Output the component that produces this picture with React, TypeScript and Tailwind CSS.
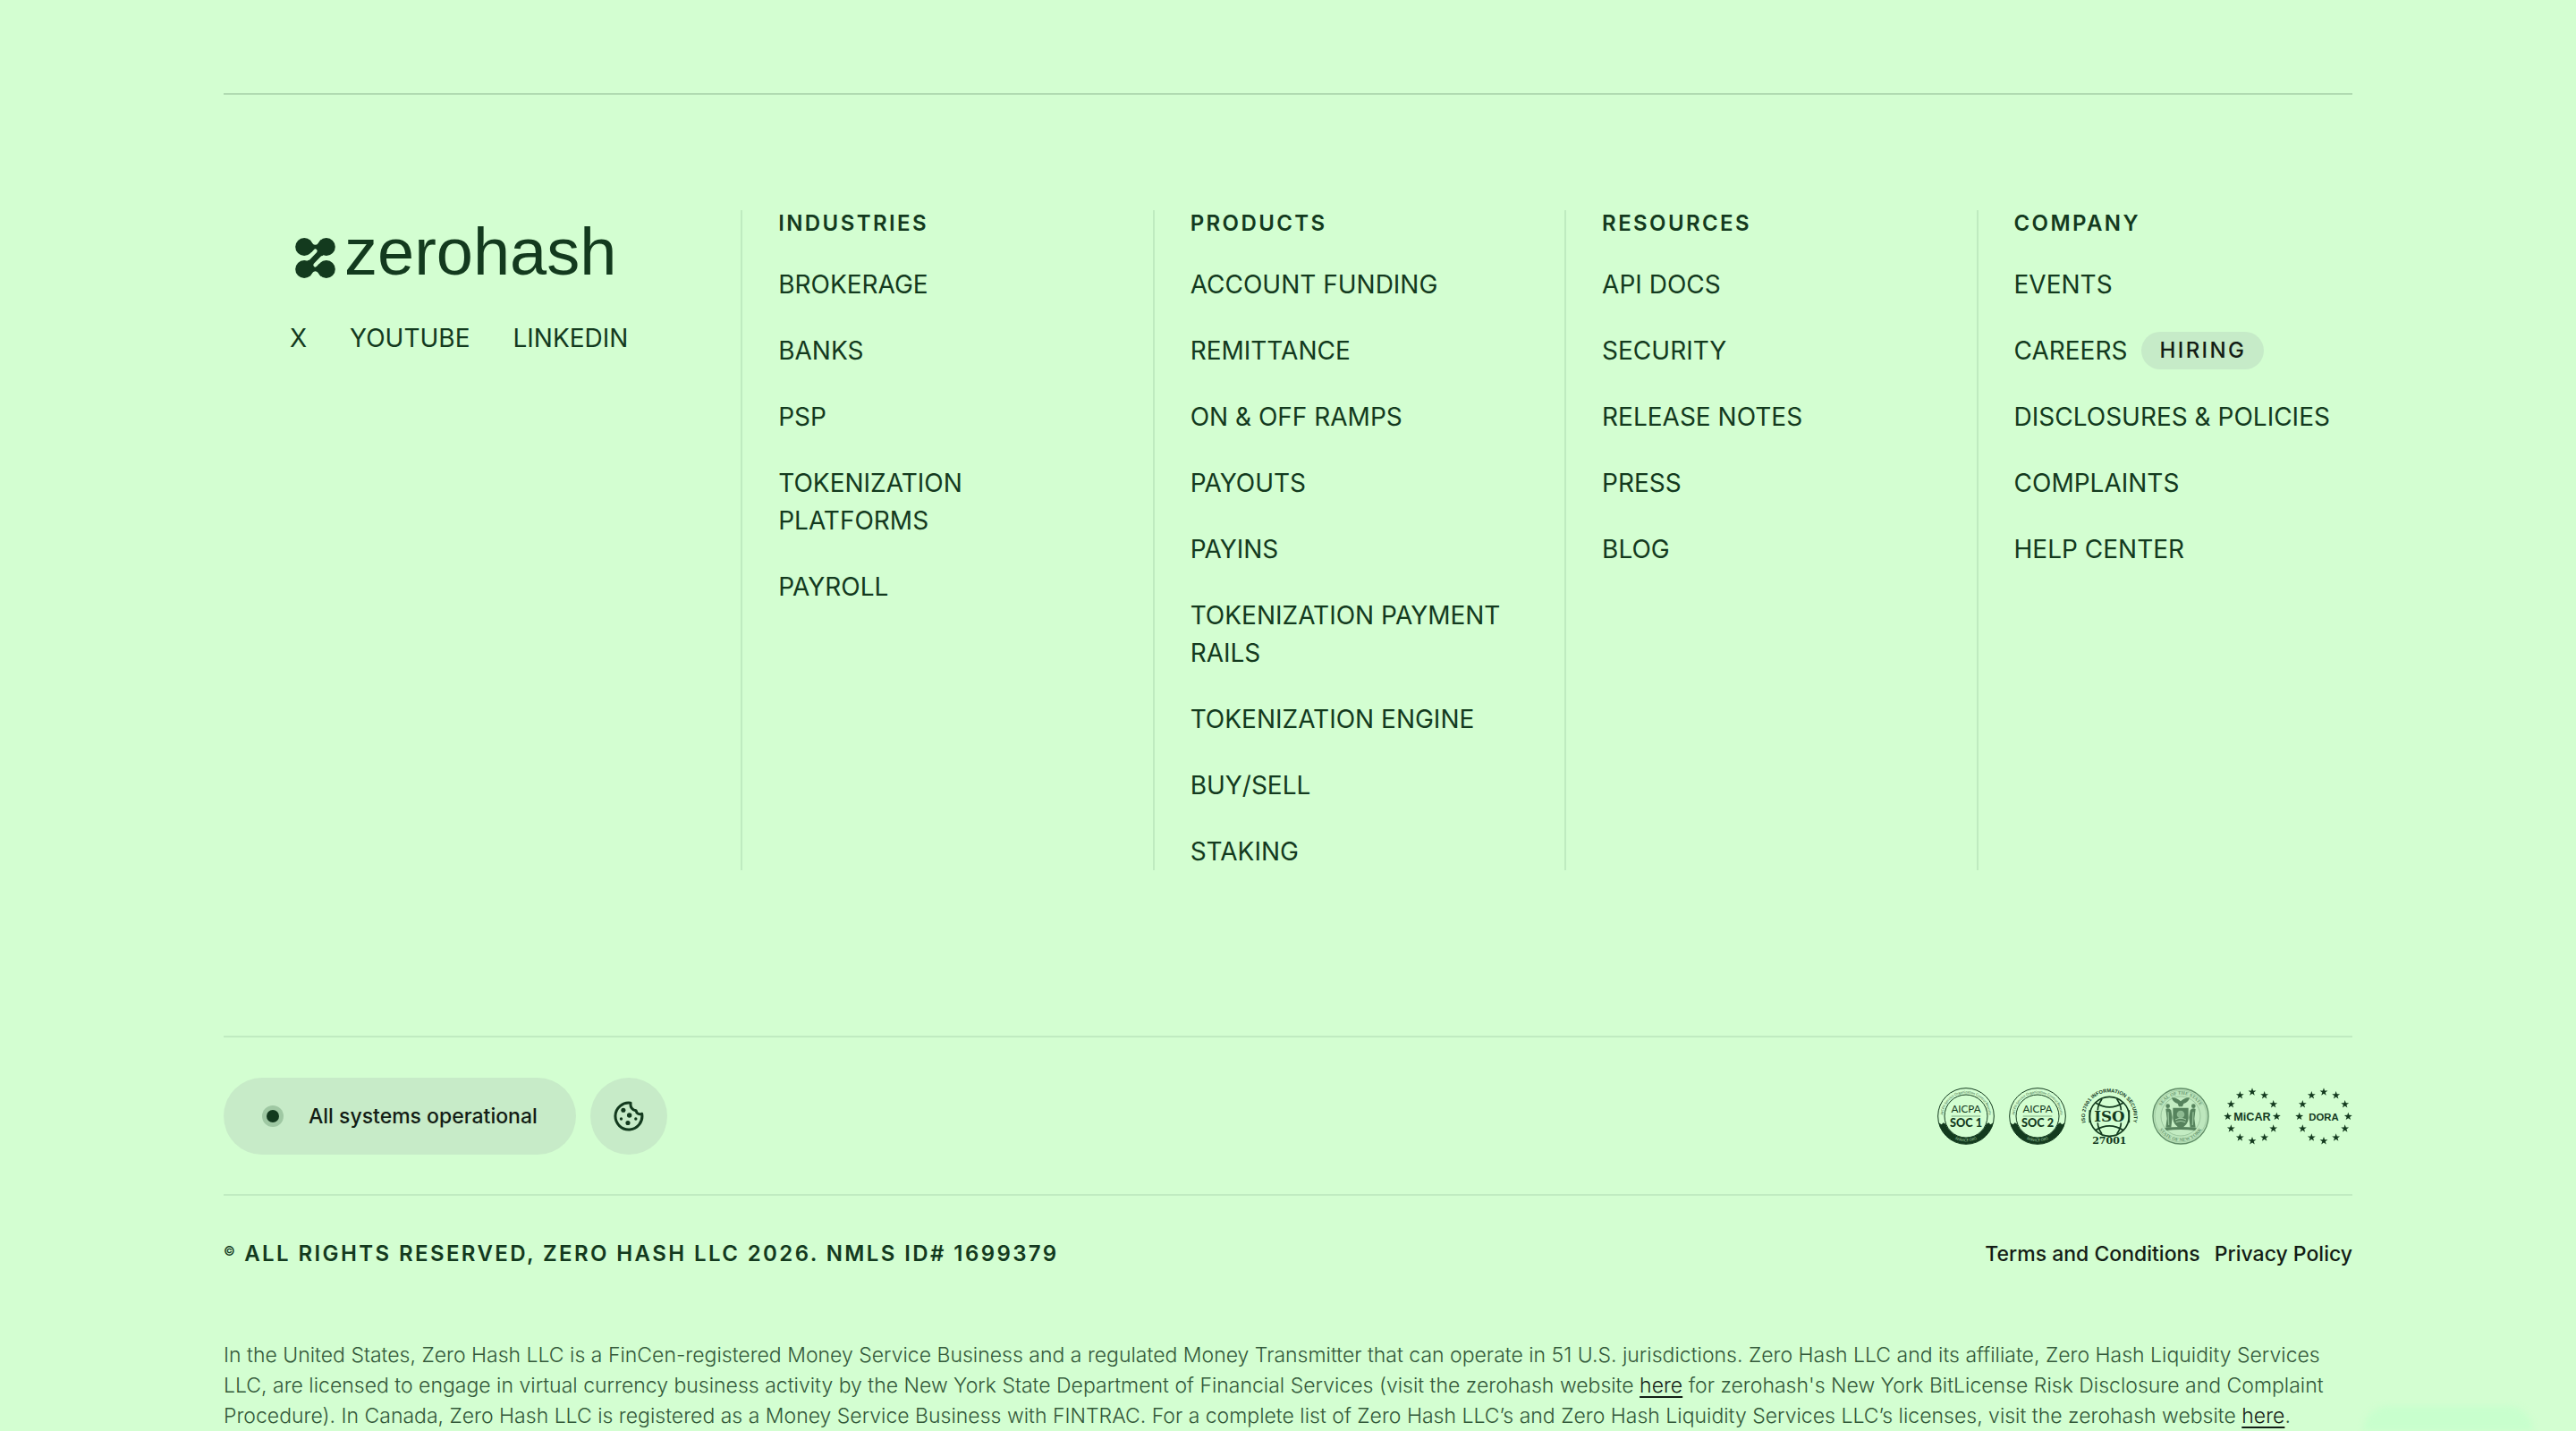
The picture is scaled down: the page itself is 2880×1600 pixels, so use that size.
interface FooterLink {
  label: string;
  badge?: string;
}

interface FooterColumn {
  title: string;
  links: FooterLink[];
}

const COLUMNS: FooterColumn[] = [
  {
    title: 'INDUSTRIES',
    links: [
      { label: 'BROKERAGE' },
      { label: 'BANKS' },
      { label: 'PSP' },
      { label: 'TOKENIZATION PLATFORMS' },
      { label: 'PAYROLL' },
    ],
  },
  {
    title: 'PRODUCTS',
    links: [
      { label: 'ACCOUNT FUNDING' },
      { label: 'REMITTANCE' },
      { label: 'ON & OFF RAMPS' },
      { label: 'PAYOUTS' },
      { label: 'PAYINS' },
      { label: 'TOKENIZATION PAYMENT RAILS' },
      { label: 'TOKENIZATION ENGINE' },
      { label: 'BUY/SELL' },
      { label: 'STAKING' },
    ],
  },
  {
    title: 'RESOURCES',
    links: [
      { label: 'API DOCS' },
      { label: 'SECURITY' },
      { label: 'RELEASE NOTES' },
      { label: 'PRESS' },
      { label: 'BLOG' },
    ],
  },
  {
    title: 'COMPANY',
    links: [
      { label: 'EVENTS' },
      { label: 'CAREERS', badge: 'HIRING' },
      { label: 'DISCLOSURES & POLICIES' },
      { label: 'COMPLAINTS' },
      { label: 'HELP CENTER' },
    ],
  },
];

const SOCIALS = ['X', 'YOUTUBE', 'LINKEDIN'];

function LogoMark() {
  return (
    <svg viewBox="60 77 134 135" className="w-[45px] h-[45px] shrink-0 fill-[#133a1e]" aria-hidden="true">
      <path d="M108 82 Q127 118 146 82 L150 125 L104 125 Z" />
      <path d="M108 207 Q127 171 146 207 L150 164 L104 164 Z" />
      <path d="M98 174 L156 115" stroke="#133a1e" strokeWidth="24" />
      <path d="M127 121 L104 145 M127 168 L150 144" stroke="#d3fed1" strokeWidth="13" strokeLinecap="round" />
      <circle cx="90" cy="107" r="30" />
      <circle cx="164" cy="107" r="30" />
      <circle cx="90" cy="182" r="30" />
      <circle cx="164" cy="182" r="30" />
    </svg>
  );
}

function CookieIcon() {
  return (
    <svg viewBox="20 18 100 100" className="w-[34px] h-[34px] fill-[#133a1e]" aria-hidden="true">
      <path
        d="M76 24.500 A44 44 0 1 0 113 60 C104 64 95 59 94 50 C82 49 74 38 76 24.500 Z"
        fill="none"
        stroke="#133a1e"
        strokeWidth="9"
        strokeLinejoin="round"
      />
      <circle cx="52" cy="48" r="7.500" />
      <circle cx="72" cy="65" r="8" />
      <circle cx="67" cy="90" r="7.500" />
      <circle cx="45" cy="77" r="5" />
      <circle cx="93" cy="77" r="5" />
    </svg>
  );
}

function SocBadge({ level }: { level: number }) {
  const top = `soc-top-${level}`;
  const bottom = `soc-bottom-${level}`;
  return (
    <svg viewBox="0 0 192 192" className="size-16 fill-[#133a1e] font-[Lato,sans-serif]" role="img" aria-label={`AICPA SOC ${level}`}>
      <defs>
        <path id={top} d="M19 96 A77 77 0 0 1 173 96" />
        <path id={bottom} d="M11 96 A85 85 0 0 0 181 96" />
      </defs>
      <circle cx="96" cy="96" r="94" fill="none" stroke="#133a1e" strokeWidth="3" />
      <circle cx="96" cy="96" r="72" fill="none" stroke="#133a1e" strokeWidth="3" />
      <path d="M4 118 L14 124 L20 118 L28 122 A73 73 0 0 0 164 122 L172 118 L178 124 L188 118 A95 95 0 0 1 4 118 Z" />
      <text fontSize="12" className="fill-[#3c6844]" textAnchor="middle">
        <textPath href={`#${top}`} startOffset="50%">AICPA Service Organization Control Reports</textPath>
      </text>
      <text fontSize="12" className="fill-[#a9d4ab]" textAnchor="middle">
        <textPath href={`#${bottom}`} startOffset="50%">SERVICE ORG</textPath>
      </text>
      <text x="96" y="84" fontSize="35" fontWeight="400" textAnchor="middle">AICPA</text>
      <path d="M47 96 H145" stroke="#7fae84" strokeWidth="3" />
      <text x="96" y="133" fontSize="38" fontWeight="900" textAnchor="middle">SOC {level}</text>
    </svg>
  );
}

function IsoBadge() {
  return (
    <svg viewBox="0 0 192 192" className="size-16 overflow-visible fill-[#133a1e]" role="img" aria-label="ISO 27001">
      <defs>
        <path id="iso-ring" d="M24 135 A82 82 0 1 1 170 135" />
      </defs>
      <g fill="none" stroke="#133a1e" strokeWidth="5">
        <circle cx="97" cy="97" r="66" />
        <path d="M72 38 C58 58 56 72 58 97 C56 122 58 136 72 156 M122 38 C136 58 138 72 136 97 C138 122 136 136 122 156" />
        <path d="M50 51 Q97 80 144 51 M50 143 Q97 114 144 143" />
      </g>
      <rect x="38" y="76" width="118" height="42" className="fill-[#d3fed1]" />
      <path d="M31 76 V118 M163 76 V118" stroke="#133a1e" strokeWidth="5" />
      <text x="97" y="114" fontSize="50" fontWeight="700" textAnchor="middle" className="font-[DejaVu_Serif,serif]">ISO</text>
      <text x="97" y="190" fontSize="33" fontWeight="700" textAnchor="middle" className="font-[DejaVu_Serif,serif]">27001</text>
      <text fontSize="17" fontWeight="700" textAnchor="middle" className="font-[Liberation_Sans,sans-serif]">
        <textPath href="#iso-ring" startOffset="50%">ISO 27001 INFORMATION SECURITY</textPath>
      </text>
    </svg>
  );
}

function SealBadge() {
  return (
    <svg viewBox="0 0 192 192" className="size-16 font-[Liberation_Serif,serif]" role="img" aria-label="State of New York seal">
      <defs>
        <path id="seal-top" d="M23 96 A73 73 0 0 1 169 96" />
        <path id="seal-bottom" d="M12 96 A84 84 0 0 0 180 96" />
      </defs>
      <circle cx="96" cy="96" r="93" fill="#bde7bd" stroke="#5f8c66" strokeWidth="4" />
      <circle cx="96" cy="96" r="87" fill="none" stroke="#94c097" strokeWidth="2" />
      <circle cx="96" cy="96" r="66" fill="#c3ecc2" stroke="#86b48b" strokeWidth="2" />
      <text fontSize="16" fontWeight="700" textAnchor="middle" className="fill-[#6a9870]">
        <textPath href="#seal-top" startOffset="50%">SEAL OF THE STATE</textPath>
      </text>
      <text fontSize="16" fontWeight="700" textAnchor="middle" className="fill-[#6a9870]">
        <textPath href="#seal-bottom" startOffset="50%">STATE OF NEW YORK</textPath>
      </text>
      <g fill="#56835d">
        <path d="M66 34 Q80 32 96 46 Q112 32 126 34 Q122 50 106 54 L102 64 H90 L86 54 Q70 50 66 34 Z" />
        <path d="M70 68 H122 V104 Q120 128 96 136 Q72 128 70 104 Z" />
        <circle cx="53" cy="62" r="7" />
        <circle cx="139" cy="62" r="7" />
        <path d="M46 72 Q56 66 64 76 L68 100 L64 134 H46 L50 104 Z" />
        <path d="M146 72 Q136 66 128 76 L124 100 L128 134 H146 L142 104 Z" />
        <path d="M42 136 Q96 128 150 136 L144 144 Q96 138 48 144 Z" />
      </g>
      <circle cx="96" cy="90" r="13" fill="#8dba91" />
      <path d="M78 108 Q96 98 114 108 M80 116 Q96 108 112 116" fill="none" stroke="#a5d0a7" strokeWidth="3" />
      <path d="M54 82 L56 126 M138 82 L136 126" stroke="#93c097" strokeWidth="4" />
    </svg>
  );
}

const STAR = 'M0 -14 L3.300 -4.500 L13.300 -4.300 L5.300 1.700 L8.200 11.300 L0 5.600 L-8.200 11.300 L-5.300 1.700 L-13.300 -4.300 L-3.300 -4.500 Z';

function StarsBadge({ label, size }: { label: string; size: number }) {
  const stars = Array.from({ length: 12 }, (_, i) => (i * Math.PI) / 6);
  return (
    <svg viewBox="0 0 192 192" className="size-16 fill-[#133a1e] font-[Liberation_Sans,sans-serif]" role="img" aria-label={label}>
      {stars.map((a) => (
        <path key={a} d={STAR} transform={`translate(${96 + 82 * Math.sin(a)} ${97 - 82 * Math.cos(a)})`} />
      ))}
      <text x="96" y="111" fontSize={size} fontWeight="700" textAnchor="middle">{label}</text>
    </svg>
  );
}

function LinkColumn({ column }: { column: FooterColumn }) {
  return (
    <nav aria-label={column.title} className="border-l-2 border-[#bfebc0] pl-10">
      <h2 className="text-2xl leading-[30px] font-semibold tracking-widest">{column.title}</h2>
      <ul className="mt-8 flex flex-col gap-8">
        {column.links.map((link) => (
          <li key={link.label} className="flex items-center gap-4 text-[28px] leading-[42px]">
            <a href="#">{link.label}</a>
            {link.badge && (
              <span className="rounded-full bg-[#c6ebc8] px-5 text-2xl leading-[42px] font-medium tracking-widest text-[#131d15]">
                {link.badge}
              </span>
            )}
          </li>
        ))}
      </ul>
    </nav>
  );
}

export default function App() {
  return (
    <div className="relative min-h-screen overflow-hidden bg-[#d3fed1] px-[250px] pt-[104px] font-[Inter,sans-serif] text-[#133a1e]">
      <div className="absolute right-12 bottom-0 h-7 w-[190px] rounded-t-[28px] bg-[#c8ffcd] blur-[3px]" />

      <footer className="relative border-t-2 border-[#b0dab1]">
        <div className="grid grid-cols-[1.28fr_1fr_1fr_1fr_1fr] gap-x-10 pt-[129px] pb-[185px]">
          <div className="pt-2.5 pl-[74px]">
            <a href="#" className="flex items-end gap-2.5 pl-1.5">
              <span className="pb-2">
                <LogoMark />
              </span>
              <span className="font-[Liberation_Sans,sans-serif] text-[74px] leading-[74px]">zerohash</span>
            </a>
            <div className="mt-[38px] flex gap-12 text-[28px] leading-[42px]">
              {SOCIALS.map((name) => (
                <a key={name} href="#">{name}</a>
              ))}
            </div>
          </div>
          {COLUMNS.map((column) => (
            <LinkColumn key={column.title} column={column} />
          ))}
        </div>

        <div className="flex items-center justify-between border-y-2 border-[#c0ebc1] pt-[45px] pb-11">
          <div className="flex gap-4">
            <a
              href="#"
              className="flex h-[86px] items-center gap-7 rounded-full bg-[#c7ebc8] px-[43px] text-[23px] font-medium text-[#131d15]"
            >
              <span className="flex size-6 items-center justify-center rounded-full bg-[#9fc8a3]">
                <span className="size-3.5 rounded-full bg-[#133a1e]" />
              </span>
              All systems operational
            </a>
            <button
              type="button"
              aria-label="Cookie settings"
              className="flex size-[86px] items-center justify-center rounded-full bg-[#c7ebc8]"
            >
              <CookieIcon />
            </button>
          </div>
          <div className="flex gap-4">
            <SocBadge level={1} />
            <SocBadge level={2} />
            <IsoBadge />
            <SealBadge />
            <StarsBadge label="MiCAR" size={38} />
            <StarsBadge label="DORA" size={34} />
          </div>
        </div>

        <div className="flex items-center justify-between pt-[50px]">
          <p className="flex gap-2 text-2xl leading-[30px] font-semibold tracking-widest">
            <span className="text-sm leading-6">©</span>
            ALL RIGHTS RESERVED, ZERO HASH LLC 2026. NMLS ID# 1699379
          </p>
          <div className="flex gap-4 text-[23px] leading-[30px] font-medium text-[#131d15]">
            <a href="#">Terms and Conditions</a>
            <a href="#">Privacy Policy</a>
          </div>
        </div>

        <p className="mt-[81px] text-[23px] leading-[34px] font-light text-[#33593a]">
          In the United States, Zero Hash LLC is a FinCen-registered Money Service Business and a regulated Money
          Transmitter that can operate in 51 U.S. jurisdictions. Zero Hash LLC and its affiliate, Zero Hash Liquidity
          Services LLC, are licensed to engage in virtual currency business activity by the New York State Department of
          Financial Services (visit the zerohash website{' '}
          <a href="#" className="text-[#131d15] underline decoration-2 underline-offset-4">here</a> for zerohash's New
          York BitLicense Risk Disclosure and Complaint Procedure). In Canada, Zero Hash LLC is registered as a Money
          Service Business with FINTRAC. For a complete list of Zero Hash LLC’s and Zero Hash Liquidity Services LLC’s
          licenses, visit the zerohash website{' '}
          <a href="#" className="text-[#131d15] underline decoration-2 underline-offset-4">here</a>.
        </p>
      </footer>
    </div>
  );
}
